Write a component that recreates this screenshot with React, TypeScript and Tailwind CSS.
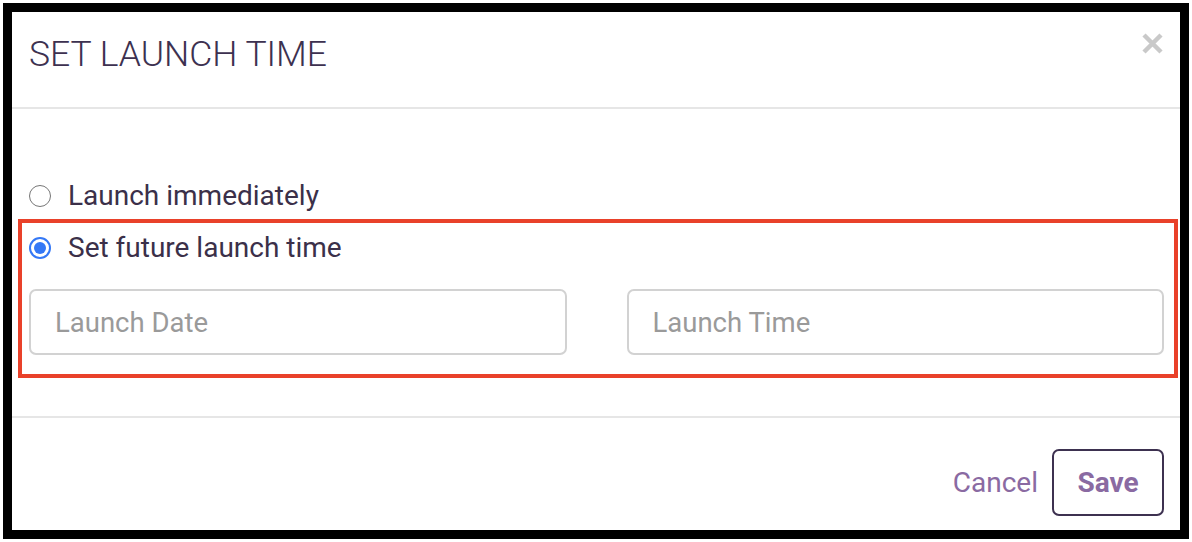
import { useState } from "react"

function Radio({ checked }: { checked: boolean }) {
  return checked ? (
    <span className="w-[22px] h-[22px] rounded-full border-2 border-[#3478f6] flex items-center justify-center shrink-0">
      <span className="w-[12px] h-[12px] rounded-full bg-[#3478f6]" />
    </span>
  ) : (
    <span className="w-[22px] h-[22px] rounded-full border-[1.5px] border-[#767676] bg-white shrink-0" />
  )
}

export default function App() {
  const [mode, setMode] = useState<"now" | "future">("future")

  return (
    <div className="w-[1192px] h-[542px] bg-white p-[3px] font-['Roboto',sans-serif]">
      <div className="w-full h-full border-[9px] border-black bg-white flex flex-col">
        <div className="h-[97px] border-b-2 border-[#e6e6e6] flex items-center justify-between pl-[17px] pr-[17px]">
          <h1 className="text-[35.5px] font-light text-[#3d3150] mt-[-10px]">SET LAUNCH TIME</h1>
          <button className="mt-[-32px]">
            <svg width="21" height="21" viewBox="0 0 21 21">
              <path d="M2 2 L19 19 M19 2 L2 19" stroke="#c9c9c9" strokeWidth="4.5" strokeLinecap="butt" />
            </svg>
          </button>
        </div>

        <div className="flex-1 border-b-2 border-[#e6e6e6] pt-[72px] pl-[6px] pr-[2px] pb-[36px] flex flex-col">
          <label className="flex items-center gap-[17px] h-[30px] pl-[11px] cursor-pointer" onClick={() => setMode("now")}>
            <Radio checked={mode === "now"} />
            <span className="text-[28px] text-[#3b3049]">Launch immediately</span>
          </label>

          <div className="mt-[8px] border-4 border-[#e9412a] pt-[10px] pl-[7px] pr-[10px] pb-[19px]">
            <label className="flex items-center gap-[17px] h-[30px] cursor-pointer" onClick={() => setMode("future")}>
              <Radio checked={mode === "future"} />
              <span className="text-[28px] text-[#3b3049]">Set future launch time</span>
            </label>
            <div className="mt-[26px] grid grid-cols-2 gap-[60px]">
              <input
                placeholder="Launch Date"
                className="h-[66px] border-2 border-[#d2d2d2] rounded-[7px] px-[24px] text-[27.5px] text-[#3b3049] placeholder:text-[#9a9a9a] focus:outline-none"
              />
              <input
                placeholder="Launch Time"
                className="h-[66px] border-2 border-[#d2d2d2] rounded-[7px] px-[24px] text-[27.5px] text-[#3b3049] placeholder:text-[#9a9a9a] focus:outline-none"
              />
            </div>
          </div>
        </div>

        <div className="h-[112px] flex items-start justify-end gap-[14px] pt-[31px] pr-[16px]">
          <button className="h-[67px] text-[28px] text-[#8a6aa2]">Cancel</button>
          <button className="h-[67px] w-[112px] border-2 border-[#3d3150] rounded-[7px] text-[28px] font-bold text-[#8a6aa2]">Save</button>
        </div>
      </div>
    </div>
  )
}
